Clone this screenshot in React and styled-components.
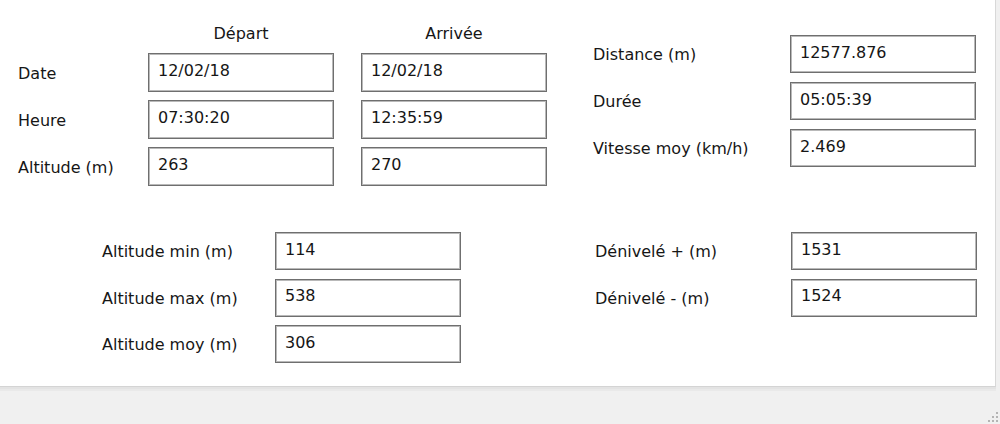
import React from "react";
import styled, { createGlobalStyle } from "styled-components";

const tripRows = [
  { label: "Date", start: "12/02/18", end: "12/02/18" },
  { label: "Heure", start: "07:30:20", end: "12:35:59" },
  { label: "Altitude (m)", start: "263", end: "270" },
];

const summaryRows = [
  { label: "Distance (m)", value: "12577.876" },
  { label: "Durée", value: "05:05:39" },
  { label: "Vitesse moy (km/h)", value: "2.469" },
];

const altitudeRows = [
  { label: "Altitude min (m)", value: "114" },
  { label: "Altitude max (m)", value: "538" },
  { label: "Altitude moy (m)", value: "306" },
];

const elevationRows = [
  { label: "Dénivelé + (m)", value: "1531" },
  { label: "Dénivelé - (m)", value: "1524" },
];

function App() {
  return (
    <>
      <GlobalStyle />
      <Window>
        <Panel>
          <TopSection>
            <TripGrid>
              <span />
              <ColumnTitle>Départ</ColumnTitle>
              <ColumnTitle>Arrivée</ColumnTitle>
              {tripRows.map((row) => (
                <React.Fragment key={row.label}>
                  <Label>{row.label}</Label>
                  <Field readOnly value={row.start} />
                  <Field readOnly value={row.end} />
                </React.Fragment>
              ))}
            </TripGrid>
            <FormGrid $labelWidth={197} $rowGap={9} $offset={14}>
              {summaryRows.map((row) => (
                <React.Fragment key={row.label}>
                  <Label>{row.label}</Label>
                  <Field readOnly value={row.value} />
                </React.Fragment>
              ))}
            </FormGrid>
          </TopSection>
          <BottomSection>
            <FormGrid $labelWidth={173} $rowGap={8.5}>
              {altitudeRows.map((row) => (
                <React.Fragment key={row.label}>
                  <Label>{row.label}</Label>
                  <Field readOnly value={row.value} />
                </React.Fragment>
              ))}
            </FormGrid>
            <FormGrid $labelWidth={196} $rowGap={8.5}>
              {elevationRows.map((row) => (
                <React.Fragment key={row.label}>
                  <Label>{row.label}</Label>
                  <Field readOnly value={row.value} />
                </React.Fragment>
              ))}
            </FormGrid>
          </BottomSection>
        </Panel>
        <Footer>
          <SizeGrip viewBox="0 0 12 12" width="12" height="12">
            {[
              [9, 1],
              [9, 5],
              [5, 5],
              [9, 9],
              [5, 9],
              [1, 9],
            ].map(([x, y]) => (
              <rect key={`${x}-${y}`} x={x} y={y} width="2" height="2" fill="#b4b4b4" />
            ))}
          </SizeGrip>
        </Footer>
      </Window>
    </>
  );
}

const GlobalStyle = createGlobalStyle`
  html, body {
    margin: 0;
    padding: 0;
    background: #f0f0f0;
  }
  body {
    font-family: "DejaVu Sans", Verdana, sans-serif;
    font-size: 16px;
    color: #161616;
  }
`;

const Window = styled.div`
  width: 1000px;
  height: 424px;
  display: flex;
  flex-direction: column;
  background: #f0f0f0;
  overflow: hidden;
`;

const Panel = styled.div`
  flex: 0 0 387px;
  box-sizing: border-box;
  margin-right: 4px;
  padding: 21px 0 0 18px;
  background: #ffffff;
  border-right: 1px solid #d8d8d8;
  border-bottom: 1px solid #d4d4d4;
  box-shadow: 0 2px 0 #e3e3e3, 0 4px 0 #e9e9e9;
`;

const TopSection = styled.div`
  display: flex;
  align-items: flex-start;
`;

const TripGrid = styled.div`
  display: grid;
  grid-template-columns: 103px 186px 186px;
  grid-template-rows: 24px repeat(3, 39px);
  column-gap: 27px;
  row-gap: 8px;
`;

const FormGrid = styled.div`
  display: grid;
  grid-template-columns: ${(p) => p.$labelWidth}px 186px;
  grid-auto-rows: 38px;
  row-gap: ${(p) => p.$rowGap}px;
  margin-top: ${(p) => p.$offset || 0}px;
  margin-left: 46px;
`;

const BottomSection = styled.div`
  display: flex;
  align-items: flex-start;
  gap: 88px;
  margin-top: 46px;
  padding-left: 38px;
`;

const ColumnTitle = styled.div`
  display: flex;
  align-items: center;
  justify-content: center;
  white-space: nowrap;
`;

const Label = styled.div`
  display: flex;
  align-items: center;
  white-space: nowrap;
  padding-top: 1px;
`;

const Field = styled.input`
  box-sizing: border-box;
  width: 100%;
  height: 100%;
  margin: 0;
  padding: 0 0 4px 9px;
  font: inherit;
  color: #161616;
  background: #ffffff;
  border: 1px solid #6f6f6f;
  box-shadow: inset 0 0 0 1px #b9b9b9;
  border-radius: 0;
  outline: none;
`;

const Footer = styled.div`
  flex: 1;
  display: flex;
  align-items: flex-end;
  justify-content: flex-end;
  padding: 0 1px 1px 0;
`;

const SizeGrip = styled.svg`
  display: block;
`;

export default App;
